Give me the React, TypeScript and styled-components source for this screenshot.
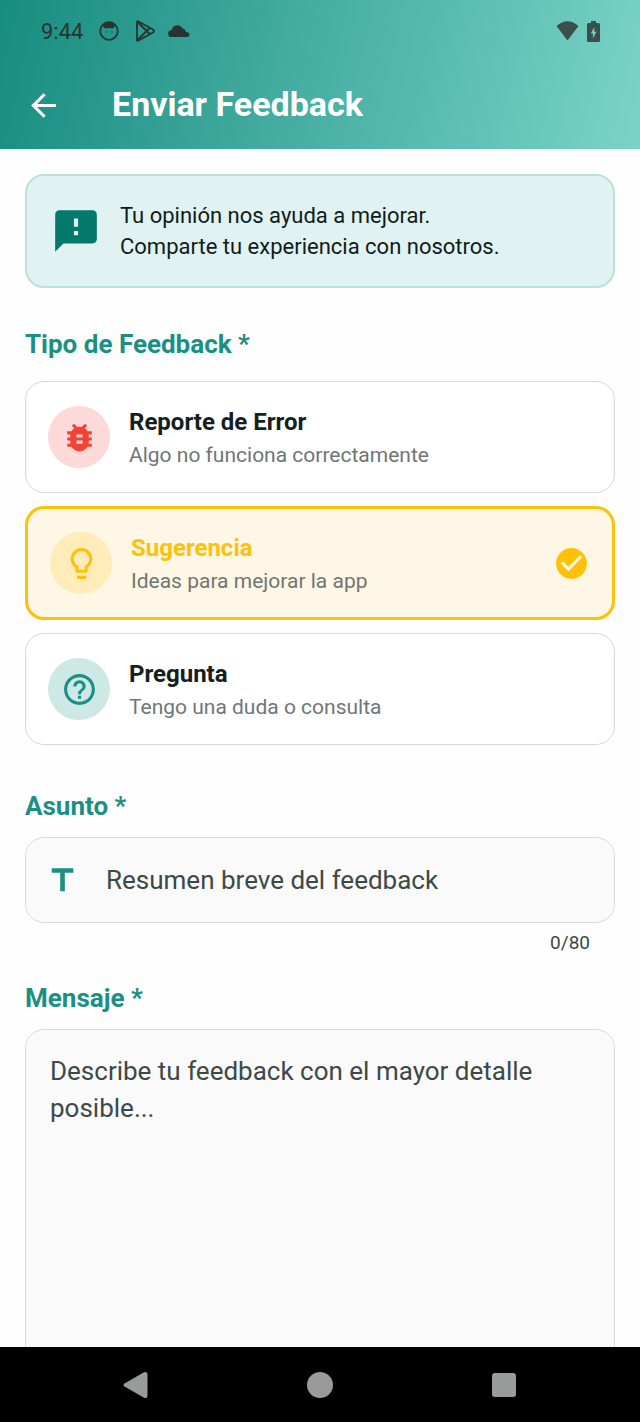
import { useState } from 'react';
import type { ReactNode } from 'react';
import styled, { createGlobalStyle } from 'styled-components';
import {
  MdArrowBack,
  MdBugReport,
  MdCheckCircle,
  MdFeedback,
  MdHelpOutline,
  MdLightbulbOutline,
  MdTitle,
} from 'react-icons/md';

const teal = '#1a8f83';
const line = '#d9d9d9';

const GlobalStyle = createGlobalStyle`
  *, *::before, *::after { box-sizing: border-box; }
  body {
    margin: 0;
    background: #fefefe;
    font-family: Roboto, "Liberation Sans", sans-serif;
  }
`;

const Screen = styled.div`
  display: flex;
  flex-direction: column;
  height: 100vh;
`;

const Header = styled.header`
  flex: none;
  background: linear-gradient(103deg, #178c80 0%, #49afa4 50%, #7ad3c8 100%);
`;

const StatusBar = styled.div`
  display: flex;
  align-items: center;
  justify-content: space-between;
  height: 62px;
  padding: 0 40px 0 41px;
  color: #26352f;
  font-size: 22px;
`;

const StatusGroup = styled.div<{ $gap: number }>`
  display: flex;
  align-items: center;
  gap: ${(p) => p.$gap}px;
`;

const AppBar = styled.div`
  display: flex;
  align-items: center;
  gap: 50px;
  height: 87px;
  padding: 0 25px;
`;

const BackButton = styled.button`
  display: flex;
  padding: 0;
  border: 0;
  background: none;
  color: #fff;
  font-size: 37px;
  cursor: pointer;
`;

const PageTitle = styled.h1`
  margin: 0;
  padding-bottom: 4px;
  color: #fff;
  font-size: 34px;
  font-weight: 700;
  line-height: 40px;
`;

const Content = styled.main`
  flex: 1;
  min-height: 0;
  overflow-y: auto;
  scrollbar-width: none;
  padding: 25px;
`;

const InfoCard = styled.section`
  display: flex;
  align-items: center;
  gap: 19px;
  padding: 24px;
  border: 2px solid #b9e0dc;
  border-radius: 19px;
  background: #e0f2f1;
  color: #101c1a;

  svg {
    flex: none;
    width: 50px;
    height: 50px;
    color: #05796b;
  }

  p {
    margin: 0;
    font-size: 22px;
    line-height: 31px;
  }
`;

const Field = styled.fieldset`
  min-width: 0;
  margin: 38px 0 0;
  padding: 0;
  border: 0;
`;

const TextField = styled.div<{ $space: number }>`
  display: flex;
  flex-direction: column;
  margin-top: ${(p) => p.$space}px;
`;

const headingText = `
  display: block;
  padding: 0;
  color: ${teal};
  font-size: 26px;
  font-weight: 700;
  line-height: 37px;
`;

const Legend = styled.legend`
  ${headingText}
  margin-bottom: 18px;
`;

const FieldLabel = styled.label`
  ${headingText}
  margin-bottom: 12px;
`;

const Options = styled.div`
  display: flex;
  flex-direction: column;
  gap: 13px;
`;

const OptionCard = styled.label<{ $selected: boolean; $color: string }>`
  display: flex;
  align-items: center;
  gap: 19px;
  padding: ${(p) => (p.$selected ? '21px 22px' : '22px')};
  border: ${(p) => (p.$selected ? `3px solid ${p.$color}` : `1px solid ${line}`)};
  border-radius: 19px;
  background: ${(p) => (p.$selected ? '#fff7e5' : '#fff')};
  cursor: pointer;

  input {
    position: absolute;
    opacity: 0;
    pointer-events: none;
  }
`;

const OptionIcon = styled.span<{ $color: string; $tint: string }>`
  display: flex;
  flex: none;
  align-items: center;
  justify-content: center;
  width: 62px;
  height: 62px;
  border-radius: 50%;
  background: ${(p) => p.$tint};
  color: ${(p) => p.$color};
  font-size: 37px;
`;

const OptionText = styled.span`
  display: flex;
  flex: 1;
  flex-direction: column;
`;

const OptionTitle = styled.span<{ $color: string }>`
  color: ${(p) => p.$color};
  font-size: 24px;
  font-weight: 700;
  line-height: 36px;
`;

const OptionHint = styled.span`
  color: #6f7674;
  font-size: 21px;
  line-height: 30px;
`;

const CheckMark = styled.span<{ $color: string }>`
  display: flex;
  color: ${(p) => p.$color};
  font-size: 37px;
`;

const InputBox = styled.div`
  display: flex;
  align-items: center;
  gap: 25px;
  height: 86px;
  padding: 0 18px;
  border: 1px solid ${line};
  border-radius: 19px;
  background: #fafafa;

  svg {
    flex: none;
    width: 37px;
    height: 37px;
    color: ${teal};
  }
`;

const textEntry = `
  border: 0;
  outline: 0;
  color: #101c1a;
  font-family: inherit;
  font-size: 26px;

  &::placeholder {
    color: #3c4946;
    opacity: 1;
  }
`;

const SubjectInput = styled.input`
  ${textEntry}
  flex: 1;
  min-width: 0;
  padding: 0;
  background: none;
`;

const Counter = styled.output`
  align-self: flex-end;
  margin-top: 7px;
  padding-right: 25px;
  color: #3c4946;
  font-size: 19px;
  line-height: 25px;
`;

const MessageInput = styled.textarea`
  ${textEntry}
  display: block;
  width: 100%;
  padding: 23px 24px;
  border: 1px solid ${line};
  border-radius: 19px;
  background: #fafafa;
  line-height: 37px;
  resize: none;
`;

const NavBar = styled.nav`
  display: flex;
  flex: none;
  align-items: center;
  justify-content: center;
  gap: 148px;
  height: 75px;
  background: #000;
`;

const NavButton = styled.button`
  display: flex;
  padding: 0;
  border: 0;
  background: none;
  color: #999b9a;
  cursor: pointer;
`;

const MAX_SUBJECT = 80;

type Option = {
  id: string;
  title: string;
  hint: string;
  color: string;
  tint: string;
  icon: ReactNode;
};

const options: Option[] = [
  {
    id: 'error',
    title: 'Reporte de Error',
    hint: 'Algo no funciona correctamente',
    color: '#f44336',
    tint: '#fdd9d7',
    icon: <MdBugReport />,
  },
  {
    id: 'sugerencia',
    title: 'Sugerencia',
    hint: 'Ideas para mejorar la app',
    color: '#ffc107',
    tint: '#ffecb8',
    icon: <MdLightbulbOutline />,
  },
  {
    id: 'pregunta',
    title: 'Pregunta',
    hint: 'Tengo una duda o consulta',
    color: teal,
    tint: '#cee9e5',
    icon: <MdHelpOutline />,
  },
];

function FaceIcon() {
  return (
    <svg width="20" height="20" viewBox="0 0 20 20" aria-hidden="true">
      <circle cx="10" cy="10" r="8.800" fill="none" stroke="currentColor" strokeWidth="1.800" />
      <path
        d="M2 6.500 Q4.500 0.800 10 0.800 T18 6.500 L15.800 5 L14 7.500 Q10 6.600 6 7.500 L4.200 5Z"
        fill="currentColor"
      />
      <circle cx="7" cy="11" r="0.700" fill="currentColor" />
      <circle cx="13" cy="11" r="0.700" fill="currentColor" />
    </svg>
  );
}

function PlayStoreIcon() {
  return (
    <svg width="21" height="22" viewBox="0 0 20 22" fill="none" stroke="currentColor" strokeWidth="1.900" strokeLinejoin="round" aria-hidden="true">
      <path d="M1.500 2.500 Q1.500 0.800 3 1.500 L17.500 9.500 Q19.500 11 17.500 12.500 L3 20.500 Q1.500 21.200 1.500 19.500Z" />
      <path d="M2 2 L14.500 14.200 M2 20 L14.500 7.800" />
    </svg>
  );
}

const CloudShape = styled.svg`
  margin-left: -4px;
`;

function CloudIcon() {
  return (
    <CloudShape width="22" height="12" viewBox="0 0 22 12" fill="currentColor" aria-hidden="true">
      <path d="M3.500 12 A3.300 3.300 0 0 1 3.500 5.300 A6 6 0 0 1 14.500 3.200 Q17.500 4 18 7 Q21.500 7.300 21.500 9.700 Q21.300 12 18.800 12Z" />
    </CloudShape>
  );
}

function WifiIcon() {
  return (
    <svg width="23" height="20" viewBox="0 0 23 20" fill="#3b4f4a" aria-hidden="true">
      <path d="M0.500 5 Q11.500-4.500 22.500 5 L11.500 19.500Z" />
    </svg>
  );
}

function BatteryIcon() {
  return (
    <svg width="13" height="21" viewBox="0 0 13 21" aria-hidden="true">
      <path
        d="M4 0 H9 V2 H11.500 Q13 2 13 3.500 V19.500 Q13 21 11.500 21 H1.500 Q0 21 0 19.500 V3.500 Q0 2 1.500 2 H4Z"
        fill="#3b4f4a"
      />
      <path d="M7.300 6 L3.800 12.500 H5.900 V17.500 L9.400 10.700 H7.300Z" fill="#74cdc2" />
    </svg>
  );
}

export default function App() {
  const [selected, setSelected] = useState('sugerencia');
  const [subject, setSubject] = useState('');
  const [message, setMessage] = useState('');

  return (
    <Screen>
      <GlobalStyle />
      <Header>
        <StatusBar>
          <StatusGroup $gap={16}>
            <span>9:44</span>
            <FaceIcon />
            <PlayStoreIcon />
            <CloudIcon />
          </StatusGroup>
          <StatusGroup $gap={8}>
            <WifiIcon />
            <BatteryIcon />
          </StatusGroup>
        </StatusBar>
        <AppBar>
          <BackButton type="button" aria-label="Volver">
            <MdArrowBack />
          </BackButton>
          <PageTitle>Enviar Feedback</PageTitle>
        </AppBar>
      </Header>

      <Content>
        <InfoCard>
          <MdFeedback />
          <p>
            Tu opinión nos ayuda a mejorar.
            <br />
            Comparte tu experiencia con nosotros.
          </p>
        </InfoCard>

        <Field>
          <Legend>Tipo de Feedback *</Legend>
          <Options>
            {options.map((option) => {
              const isSelected = option.id === selected;
              return (
                <OptionCard key={option.id} $selected={isSelected} $color={option.color}>
                  <input
                    type="radio"
                    name="tipo"
                    value={option.id}
                    checked={isSelected}
                    onChange={() => setSelected(option.id)}
                  />
                  <OptionIcon $color={option.color} $tint={option.tint}>
                    {option.icon}
                  </OptionIcon>
                  <OptionText>
                    <OptionTitle $color={isSelected ? option.color : '#14201d'}>
                      {option.title}
                    </OptionTitle>
                    <OptionHint>{option.hint}</OptionHint>
                  </OptionText>
                  {isSelected && (
                    <CheckMark $color={option.color}>
                      <MdCheckCircle />
                    </CheckMark>
                  )}
                </OptionCard>
              );
            })}
          </Options>
        </Field>

        <TextField $space={43}>
          <FieldLabel htmlFor="asunto">Asunto *</FieldLabel>
          <InputBox>
            <MdTitle />
            <SubjectInput
              id="asunto"
              type="text"
              maxLength={MAX_SUBJECT}
              placeholder="Resumen breve del feedback"
              value={subject}
              onChange={(event) => setSubject(event.target.value)}
            />
          </InputBox>
          <Counter htmlFor="asunto">
            {subject.length}/{MAX_SUBJECT}
          </Counter>
        </TextField>

        <TextField $space={25}>
          <FieldLabel htmlFor="mensaje">Mensaje *</FieldLabel>
          <MessageInput
            id="mensaje"
            rows={10}
            placeholder="Describe tu feedback con el mayor detalle posible..."
            value={message}
            onChange={(event) => setMessage(event.target.value)}
          />
        </TextField>
      </Content>

      <NavBar aria-label="Sistema">
        <NavButton type="button" aria-label="Atrás">
          <svg width="36" height="36" viewBox="0 0 36 36" fill="currentColor" aria-hidden="true">
            <path d="M6.500 16.500 L26 5.300 Q29.500 4 29.500 7.500 V28.500 Q29.500 32 26 30.700 L6.500 19.500 Q4.500 18 6.500 16.500Z" />
          </svg>
        </NavButton>
        <NavButton type="button" aria-label="Inicio">
          <svg width="36" height="36" viewBox="0 0 36 36" fill="currentColor" aria-hidden="true">
            <circle cx="18" cy="18" r="13" />
          </svg>
        </NavButton>
        <NavButton type="button" aria-label="Recientes">
          <svg width="36" height="36" viewBox="0 0 36 36" fill="currentColor" aria-hidden="true">
            <rect x="6" y="6" width="24" height="24" rx="3" />
          </svg>
        </NavButton>
      </NavBar>
    </Screen>
  );
}
